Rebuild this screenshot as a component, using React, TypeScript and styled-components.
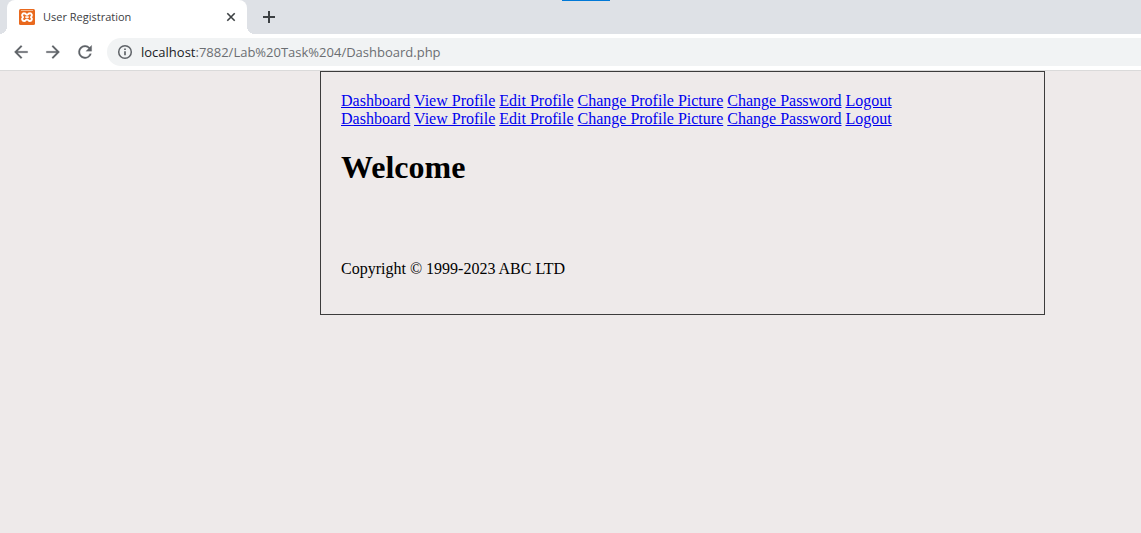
import React from "react";
import styled, { createGlobalStyle } from "styled-components";

const GlobalStyle = createGlobalStyle`
  * { box-sizing: border-box; }
  body {
    margin: 0;
    background: #eeeaea;
    font-family: "Liberation Serif", "Times New Roman", serif;
    font-size: 16px;
    line-height: 18px;
    color: #000;
  }
`;

const TabStrip = styled.header`
  display: flex;
  height: 34px;
  padding-left: 7px;
  background: #dee1e6;
  position: relative;
`;

const LoadingBar = styled.span`
  position: absolute;
  top: 0;
  left: 562px;
  width: 48px;
  height: 1px;
  background: #0078d7;
`;

const Tab = styled.div`
  position: relative;
  display: flex;
  align-items: center;
  width: 240px;
  padding: 0 10px 0 12px;
  background: #fff;
  border-radius: 8px 8px 0 0;
  font: 11px/16px "Open Sans", sans-serif;
  color: #3c4043;

  &::before,
  &::after {
    content: "";
    position: absolute;
    bottom: 0;
    width: 8px;
    height: 8px;
  }
  &::before {
    left: -8px;
    background: radial-gradient(circle at 0 0, transparent 8px, #fff 8px);
  }
  &::after {
    right: -8px;
    background: radial-gradient(circle at 100% 0, transparent 8px, #fff 8px);
  }
`;

const TabTitle = styled.span`
  flex: 1;
  margin-left: 8px;
  white-space: nowrap;
`;

const IconButton = styled.button<{ $size: number }>`
  display: flex;
  flex: none;
  align-items: center;
  justify-content: center;
  width: ${(p) => p.$size}px;
  height: ${(p) => p.$size}px;
  padding: 0;
  border: 0;
  background: none;
  color: #3c4043;
`;

const NewTab = styled.div`
  display: flex;
  align-items: center;
  margin-left: 12px;
`;

const Toolbar = styled.div`
  display: flex;
  align-items: center;
  height: 37px;
  padding-left: 11px;
  background: #fff;
  border-bottom: 1px solid #dadada;
`;

const NavButtons = styled.div`
  display: flex;
  gap: 12px;
  margin-right: 12px;

  button { color: #5f6368; }
`;

const AddressBar = styled.div`
  display: flex;
  flex: 1;
  align-items: center;
  height: 28px;
  padding-left: 10px;
  border-radius: 14px 0 0 14px;
  background: #f1f3f4;
`;

const Url = styled.div`
  margin-left: 8px;
  font: 13px/20px "Open Sans", sans-serif;
  color: #6b6e72;
  white-space: nowrap;
`;

const Host = styled.span`
  color: #202124;
`;

const Panel = styled.main`
  margin: 0 96px 0 320px;
  padding: 20px 20px 36px;
  border: 1px solid #3c3c3c;
`;

const NavLink = styled.a`
  color: #0000ee;
`;

const Heading = styled.h1`
  margin: 21px 0 75px;
  font-size: 32px;
  line-height: 36px;
`;

const Footer = styled.footer``;

const links = [
  "Dashboard",
  "View Profile",
  "Edit Profile",
  "Change Profile Picture",
  "Change Password",
  "Logout",
];

const LinkRow = () => (
  <nav>
    {links.map((label) => (
      <React.Fragment key={label}>
        <NavLink href="#">{label}</NavLink>{" "}
      </React.Fragment>
    ))}
  </nav>
);

const XamppIcon = () => (
  <svg width="16" height="16" viewBox="0 0 16 16" aria-hidden="true">
    <rect width="16" height="16" rx="1.5" fill="#e9691e" />
    <path d="M2 1.500h12" stroke="#f6b88f" strokeWidth="1" />
    <path
      d="M5.200 4.200A2 2 0 0 0 3.900 7.800Q4.300 8 3.900 8.400A2 2 0 0 0 5.200 12C6.800 12 6.800 10.400 8 10.400S9.200 12 10.800 12A2 2 0 0 0 12.100 8.400Q11.700 8 12.100 7.800A2 2 0 0 0 10.800 4.200C9.200 4.200 9.200 5.800 8 5.800S6.800 4.200 5.200 4.200Z"
      fill="none"
      stroke="#fff"
      strokeWidth="1.900"
      strokeLinejoin="round"
    />
    <path d="M6.300 8.100h3.400" stroke="#fff" strokeWidth="1.700" />
  </svg>
);

const CloseIcon = () => (
  <svg width="12" height="12" viewBox="0 0 12 12" aria-hidden="true">
    <path d="M2.300 2.300 9.700 9.700M9.700 2.300 2.300 9.700" stroke="currentColor" strokeWidth="1.600" />
  </svg>
);

const PlusIcon = () => (
  <svg width="12" height="12" viewBox="0 0 12 12" aria-hidden="true">
    <path d="M6 0v12M0 6h12" stroke="currentColor" strokeWidth="2" />
  </svg>
);

const ArrowIcon = ({ path }: { path: string }) => (
  <svg width="20" height="20" viewBox="0 0 24 24" aria-hidden="true">
    <path d={path} fill="currentColor" stroke="currentColor" strokeWidth="0.250" />
  </svg>
);

const InfoIcon = () => (
  <svg width="16" height="16" viewBox="0 0 16 16" aria-hidden="true">
    <circle cx="8" cy="8" r="6.300" fill="none" stroke="#5f6368" strokeWidth="1.500" />
    <path d="M8 7.200v4M8 4.500v1.500" stroke="#5f6368" strokeWidth="1.700" />
  </svg>
);

export default function App() {
  return (
    <>
      <GlobalStyle />
      <TabStrip>
        <LoadingBar />
        <Tab>
          <XamppIcon />
          <TabTitle>User Registration</TabTitle>
          <IconButton $size={12} aria-label="Close tab">
            <CloseIcon />
          </IconButton>
        </Tab>
        <NewTab>
          <IconButton $size={20} aria-label="New tab">
            <PlusIcon />
          </IconButton>
        </NewTab>
      </TabStrip>
      <Toolbar>
        <NavButtons>
          <IconButton $size={20} aria-label="Back">
            <ArrowIcon path="M20 11H7.830l5.590-5.590L12 4l-8 8 8 8 1.410-1.410L7.830 13H20v-2z" />
          </IconButton>
          <IconButton $size={20} aria-label="Forward">
            <ArrowIcon path="M12 4l-1.410 1.410L16.170 11H4v2h12.170l-5.580 5.590L12 20l8-8z" />
          </IconButton>
          <IconButton $size={20} aria-label="Reload">
            <ArrowIcon path="M17.650 6.350A7.958 7.958 0 0 0 12 4a8 8 0 1 0 7.730 10h-2.080A5.990 5.990 0 0 1 12 18a6 6 0 1 1 0-12c1.660 0 3.140.690 4.220 1.780L13 11h7V4l-2.350 2.350z" />
          </IconButton>
        </NavButtons>
        <AddressBar>
          <InfoIcon />
          <Url>
            <Host>localhost</Host>:7882/Lab%20Task%204/Dashboard.php
          </Url>
        </AddressBar>
      </Toolbar>
      <Panel>
        <LinkRow />
        <LinkRow />
        <Heading>Welcome</Heading>
        <Footer>Copyright © 1999-2023 ABC LTD</Footer>
      </Panel>
    </>
  );
}
